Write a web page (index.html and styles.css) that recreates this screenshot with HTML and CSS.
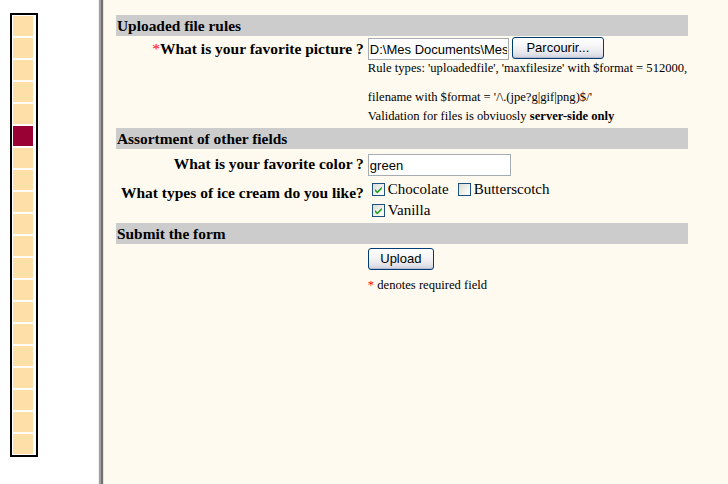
FILE: index.html
```html
<!DOCTYPE html>
<html>
<head>
<meta charset="utf-8">
<title>HTML_QuickForm upload example</title>
<link rel="stylesheet" href="styles.css">
</head>
<body>
<div class="frameset">
  <nav class="nav">
    <div class="bar">
      <span class="sq"></span><span class="sq"></span><span class="sq"></span><span class="sq"></span><span class="sq"></span>
      <span class="sq sq-on"></span><span class="sq"></span><span class="sq"></span><span class="sq"></span><span class="sq"></span>
      <span class="sq"></span><span class="sq"></span><span class="sq"></span><span class="sq"></span><span class="sq"></span>
      <span class="sq"></span><span class="sq"></span><span class="sq"></span><span class="sq"></span><span class="sq"></span>
    </div>
  </nav>
  <div class="divider"></div>
  <main class="main">
    <form class="form">
      <table class="qf">
        <colgroup><col class="c1"><col class="c2"></colgroup>
        <tr><td class="hdr" colspan="2">Uploaded file rules</td></tr>
        <tr>
          <td class="lbl lbl-pic"><span class="req">*</span>What is your favorite picture ?</td>
          <td class="fld">
            <div class="fileline">
              <input class="txt txt-file" type="text" value="D:\Mes Documents\Mes images\photo.jpg" readonly>
              <button type="button" class="btn btn-browse">Parcourir...</button>
            </div>
            <div class="small">Rule types: 'uploadedfile', 'maxfilesize' with $format = 512000,<br><br>filename with $format = '/\.(jpe?g|gif|png)$/'</div>
            <div class="small note">Validation for files is obviuosly <b>server-side only</b></div>
          </td>
        </tr>
        <tr><td class="hdr" colspan="2">Assortment of other fields</td></tr>
        <tr>
          <td class="lbl lbl-color">What is your favorite color ?</td>
          <td class="fld"><input class="txt txt-color" type="text" value="green"></td>
        </tr>
        <tr>
          <td class="lbl lbl-ice">What types of ice cream do you like?</td>
          <td class="fld">
            <div class="cbline cbline-first">
              <span class="cb"><svg viewBox="0 0 13 13" width="13" height="13"><path d="M3 6 L5.3 8.2 L9.8 3.7 L9.8 5.9 L5.3 10.4 L3 8.2 Z" fill="#21a121"/></svg></span><span class="cbl">Chocolate</span>
              <span class="cb cb-off"></span><span class="cbl">Butterscotch</span>
            </div>
            <div class="cbline">
              <span class="cb"><svg viewBox="0 0 13 13" width="13" height="13"><path d="M3 6 L5.3 8.2 L9.8 3.7 L9.8 5.9 L5.3 10.4 L3 8.2 Z" fill="#21a121"/></svg></span><span class="cbl">Vanilla</span>
            </div>
          </td>
        </tr>
        <tr><td class="hdr" colspan="2">Submit the form</td></tr>
        <tr>
          <td class="lbl"></td>
          <td class="fld"><button type="button" class="btn btn-upload">Upload</button></td>
        </tr>
        <tr>
          <td class="lbl"></td>
          <td class="fld small reqnote"><span class="req">*</span> denotes required field</td>
        </tr>
      </table>
    </form>
  </main>
</div>
</body>
</html>
```
FILE: styles.css
```css
html, body {
  margin: 0;
  padding: 0;
  height: 100%;
}
body {
  font-family: "Liberation Serif", "Times New Roman", serif;
  font-size: 16px;
  color: #000;
  background: #fff;
}
.frameset {
  display: flex;
  height: 484px;
  overflow: hidden;
}
.nav {
  width: 98px;
  flex: none;
  background: #fff;
  padding: 13px 0 0 10px;
  box-sizing: border-box;
}
.bar {
  width: 22px;
  border: 2px solid #000;
  padding: 1px;
  display: flex;
  flex-direction: column;
  gap: 2px;
}
.sq {
  display: block;
  width: 20px;
  height: 20px;
  background: #ffdfa8;
}
.sq-on {
  background: #990033;
}
.divider {
  width: 6px;
  flex: none;
  background: linear-gradient(to right, #f0f0f0 0, #f0f0f0 1px, #a0a0a0 1px, #a0a0a0 3px, #707070 3px, #707070 5px, #e8e4dc 5px);
}
.main {
  flex: 1;
  background: #fffaf0;
  padding: 13px 0 0 10px;
  box-sizing: border-box;
}
.form {
  margin: 0;
}
.qf {
  border-collapse: separate;
  border-spacing: 2px;
  table-layout: fixed;
  width: 576px;
}
.c1 { width: 248px; }
.c2 { width: 320px; }
.qf td {
  padding: 0 1px;
  vertical-align: top;
}
.qf td.hdr {
  background: #cccccc;
  font-weight: bold;
  font-size: 15.4px;
  line-height: 19px;
  height: 21px;
  padding: 1px;
  box-sizing: border-box;
  white-space: nowrap;
  text-align: left;
}
.lbl {
  text-align: right;
  font-weight: bold;
  font-size: 15.5px;
  white-space: nowrap;
  line-height: 18px;
}
.lbl-pic { padding-top: 2px !important; }
.lbl-color { padding-top: 4px !important; }
.lbl-ice { padding-top: 6px !important; }
.req {
  color: #ff0000;
  font-weight: normal;
}
.fileline {
  display: flex;
  align-items: flex-start;
  gap: 3px;
  height: 23px;
}
.txt {
  font-family: "Liberation Sans", Arial, sans-serif;
  font-size: 13px;
  border: 1px solid #a5acb2;
  background: #fff;
  color: #000;
  padding: 1px 1px;
  margin: 0;
  box-sizing: border-box;
  height: 22px;
  outline: none;
}
.txt-file {
  width: 141px;
}
.txt-color {
  width: 143px;
  margin-top: 3px;
}
.btn {
  font-family: "Liberation Sans", Arial, sans-serif;
  font-size: 13px;
  color: #000;
  height: 22px;
  border: 1px solid #003c74;
  border-radius: 3px;
  background: linear-gradient(to bottom, #ffffff 0%, #f6f6f8 40%, #e6e6ec 75%, #cfd0dc 100%);
  box-shadow: inset 0 -1px 0 #b8bcd0;
  padding: 0;
  margin: 0;
  line-height: 18px;
}
.btn-browse {
  width: 92px;
  margin-top: -1px;
}
.btn-upload {
  width: 66px;
  margin-top: 2px;
  margin-bottom: 2px;
}
.small {
  font-size: 12.6px;
  line-height: 14.6px;
  white-space: nowrap;
}
.note {
  margin-top: 4px;
  margin-bottom: 3px;
}
.reqnote {
  padding-top: 4px !important;
}
.cbline {
  display: flex;
  align-items: center;
  height: 21px;
  line-height: 21px;
  font-size: 15px;
}
.cbline-first {
  margin-top: 1px;
}
.cb {
  width: 13px;
  height: 13px;
  box-sizing: border-box;
  border: 1px solid #1c5180;
  background: linear-gradient(135deg, #dcdcd7 0%, #f2f2ee 60%, #ffffff 100%);
  margin: 0 3px 0 4px;
  flex: none;
  display: block;
  position: relative;
}
.cb svg {
  position: absolute;
  left: -1px;
  top: -1px;
}
.cbl {
  margin-right: 5px;
}
```
